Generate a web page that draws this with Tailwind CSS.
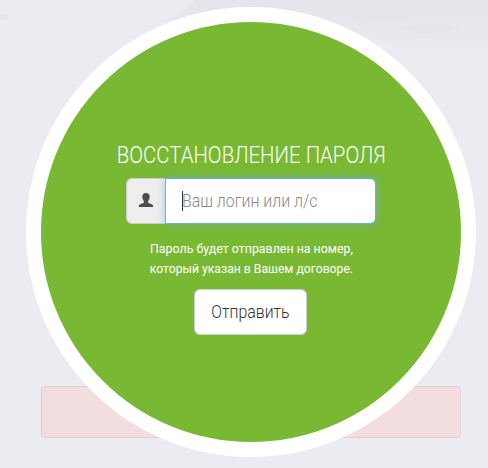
<!DOCTYPE html>
<html lang="ru">
<head>
<meta charset="utf-8">
<title>Восстановление пароля</title>
<script src="https://cdn.jsdelivr.net/npm/@tailwindcss/browser@4"></script>
</head>
<body class="relative h-[468px] w-[488px] overflow-hidden bg-[#ebecf1] pt-[7px] pl-[26px] font-['Roboto','Liberation_Sans',sans-serif]">
<svg class="absolute inset-0" width="488" height="120" viewBox="0 0 488 120" aria-hidden="true">
  <defs>
    <linearGradient id="haze" x1="0" y1="0" x2="0" y2="1"><stop offset="0" stop-color="#e4e5ea"/><stop offset="1" stop-color="#ebecf1"/></linearGradient>
  </defs>
  <path d="M195 0H488V58L400 44L250 20L165 20C178 15 188 8 195 0Z" fill="url(#haze)"/>
  <path d="M0 13L13 18L0 20Z" fill="#e5e6eb"/>
  <path d="M335 10L395 4L440 0H488V8L430 16L360 22Z" fill="#e2e3e8" opacity=".5"/>
  <path d="M398 27L445 24L460 30L420 34Z" fill="#e2e3e8" opacity=".5"/>
</svg>
<div class="absolute top-[386px] left-[41px] h-[52px] w-[420px] rounded border border-[#ebccd1] bg-[#f2dede]"></div>
<main class="relative flex h-[450px] w-[450px] flex-col items-center rounded-full border-[15px] border-white bg-[#79b833] pt-[120px]">
  <h1 class="flex h-[26px] w-[269px] items-center justify-center whitespace-nowrap text-2xl font-light text-white"><span class="scale-x-[0.85]">ВОССТАНОВЛЕНИЕ ПАРОЛЯ</span></h1>
  <div class="mt-[10px] flex h-[46px] w-[250px]">
    <div class="flex w-[39px] items-center justify-center rounded-l-md border border-r-0 border-[#ccc] bg-[#eee]">
      <svg class="-mt-[2px]" width="16" height="16" viewBox="0 0 16 16" fill="#4d4d4d"><path d="M8 1C5.600 1 4.300 2.500 4.300 4.800C4.300 6.700 5 8.300 5.900 9.200V10.500C5.900 11.300 1 11.900 .8 13.800V15H15.200V13.800C15 11.900 10.100 11.300 10.100 10.500V9.200C11 8.300 11.700 6.700 11.700 4.800C11.700 2.500 10.400 1 8 1Z"/></svg>
    </div>
    <div class="flex w-[211px] items-center rounded-r-md border border-[#66afe9] bg-white pl-4 text-lg font-light text-[#888] shadow-[0_0_8px_rgba(102,175,233,0.6)]">
      <span class="h-5 w-px bg-[#333]"></span><span class="-ml-px origin-left scale-x-[0.885] whitespace-nowrap">Ваш логин или л/с</span>
    </div>
  </div>
  <p class="mt-[15px] flex flex-col items-center whitespace-nowrap text-[13px] leading-5 text-white"><span class="scale-x-[0.953]">Пароль будет отправлен на номер,</span><span class="scale-x-[0.937]">который указан в Вашем договоре.</span></p>
  <button class="mt-[10px] mr-[1px] flex h-[46px] w-[113px] items-center justify-center rounded-md border border-[#ccc] bg-white text-lg font-light text-[#333]"><span class="scale-x-[0.88]">Отправить</span></button>
</main>
</body>
</html>
